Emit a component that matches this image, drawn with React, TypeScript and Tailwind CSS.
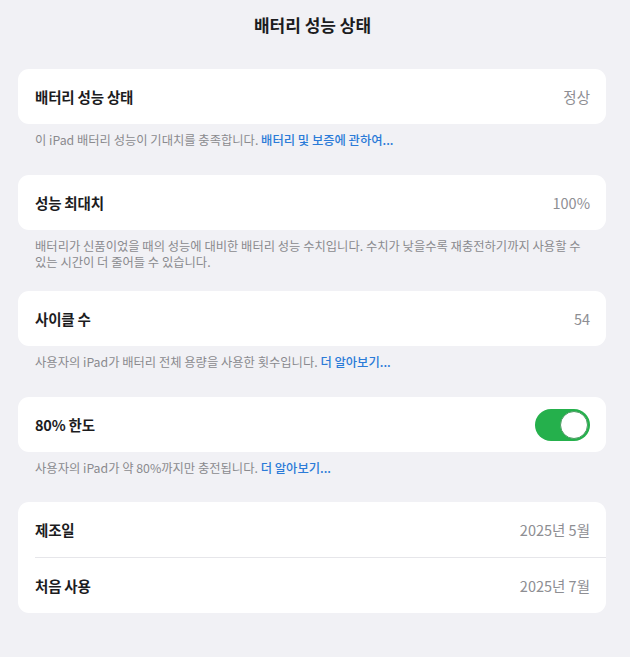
import React from "react";

const font = { fontFamily: '"Noto Sans CJK KR", "Noto Sans", sans-serif' };

function Row({ label, value, children }: { label: string; value?: string; children?: React.ReactNode }) {
  return (
    <div className="flex h-[55px] items-center justify-between pl-[17px] pr-[16px]">
      <span className="text-[14.5px] font-semibold text-[#1c1c1e] tracking-[-0.2px]">{label}</span>
      {value !== undefined ? <span className="text-[14.5px] text-[#8e8e93]">{value}</span> : children}
    </div>
  );
}

function Footer({ children }: { children: React.ReactNode }) {
  return (
    <p className="px-[17px] pt-[8px] text-[12.3px] leading-[16px] text-[#8a8a8e]">{children}</p>
  );
}

function Link({ children }: { children: React.ReactNode }) {
  return <span className="font-medium text-[#2b7bd8]">{children}</span>;
}

export default function App() {
  return (
    <div className="min-h-[657px] w-[630px] bg-[#f1f1f5] pt-[12px]" style={font}>
      <h1 className="pr-[5px] text-center text-[17px] font-bold leading-[26px] text-[#1c1c1e]">배터리 성능 상태</h1>
      <div className="ml-[18px] mt-[31px] w-[588px]">
        <div className="rounded-[11px] bg-white">
          <Row label="배터리 성능 상태" value="정상" />
        </div>
        <Footer>
          이 iPad 배터리 성능이 기대치를 충족합니다. <Link>배터리 및 보증에 관하여...</Link>
        </Footer>

        <div className="mt-[27px] rounded-[11px] bg-white">
          <Row label="성능 최대치" value="100%" />
        </div>
        <Footer>
          배터리가 신품이었을 때의 성능에 대비한 배터리 성능 수치입니다. 수치가 낮을수록 재충전하기까지 사용할 수
          <br />
          있는 시간이 더 줄어들 수 있습니다.
        </Footer>

        <div className="mt-[21px] rounded-[11px] bg-white">
          <Row label="사이클 수" value="54" />
        </div>
        <Footer>
          사용자의 iPad가 배터리 전체 용량을 사용한 횟수입니다. <Link>더 알아보기...</Link>
        </Footer>

        <div className="mt-[27px] rounded-[11px] bg-white">
          <Row label="80% 한도">
            <div className="flex h-[32px] w-[55px] items-center justify-end rounded-full bg-[#25b04c] pr-[2px]">
              <div className="h-[28px] w-[28px] rounded-full border border-[#4c9c63] bg-white" />
            </div>
          </Row>
        </div>
        <Footer>
          사용자의 iPad가 약 80%까지만 충전됩니다. <Link>더 알아보기...</Link>
        </Footer>

        <div className="mt-[26px] rounded-[11px] bg-white">
          <Row label="제조일" value="2025년 5월" />
          <div className="ml-[17px] h-px bg-[#e6e6ea]" />
          <Row label="처음 사용" value="2025년 7월" />
        </div>
      </div>
    </div>
  );
}
